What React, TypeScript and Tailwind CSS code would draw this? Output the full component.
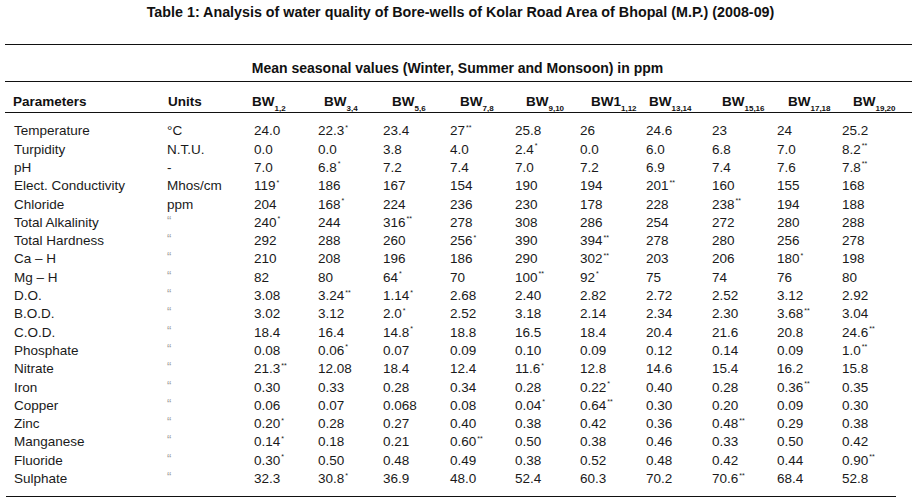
import React from 'react';

type Row = [string, string, string[]];

const rows: Row[] = [
  ['Temperature', '°C', ['24.0', '22.3*', '23.4', '27**', '25.8', '26', '24.6', '23', '24', '25.2']],
  ['Turpidity', 'N.T.U.', ['0.0', '0.0', '3.8', '4.0', '2.4*', '0.0', '6.0', '6.8', '7.0', '8.2**']],
  ['pH', '-', ['7.0', '6.8*', '7.2', '7.4', '7.0', '7.2', '6.9', '7.4', '7.6', '7.8**']],
  ['Elect. Conductivity', 'Mhos/cm', ['119*', '186', '167', '154', '190', '194', '201**', '160', '155', '168']],
  ['Chloride', 'ppm', ['204', '168*', '224', '236', '230', '178', '228', '238**', '194', '188']],
  ['Total Alkalinity', '“', ['240*', '244', '316**', '278', '308', '286', '254', '272', '280', '288']],
  ['Total Hardness', '“', ['292', '288', '260', '256*', '390', '394**', '278', '280', '256', '278']],
  ['Ca – H', '“', ['210', '208', '196', '186', '290', '302**', '203', '206', '180*', '198']],
  ['Mg – H', '“', ['82', '80', '64*', '70', '100**', '92*', '75', '74', '76', '80']],
  ['D.O.', '“', ['3.08', '3.24**', '1.14*', '2.68', '2.40', '2.82', '2.72', '2.52', '3.12', '2.92']],
  ['B.O.D.', '“', ['3.02', '3.12', '2.0*', '2.52', '3.18', '2.14', '2.34', '2.30', '3.68**', '3.04']],
  ['C.O.D.', '“', ['18.4', '16.4', '14.8*', '18.8', '16.5', '18.4', '20.4', '21.6', '20.8', '24.6**']],
  ['Phosphate', '“', ['0.08', '0.06*', '0.07', '0.09', '0.10', '0.09', '0.12', '0.14', '0.09', '1.0**']],
  ['Nitrate', '“', ['21.3**', '12.08', '18.4', '12.4', '11.6*', '12.8', '14.6', '15.4', '16.2', '15.8']],
  ['Iron', '“', ['0.30', '0.33', '0.28', '0.34', '0.28', '0.22*', '0.40', '0.28', '0.36**', '0.35']],
  ['Copper', '“', ['0.06', '0.07', '0.068', '0.08', '0.04*', '0.64**', '0.30', '0.20', '0.09', '0.30']],
  ['Zinc', '“', ['0.20*', '0.28', '0.27', '0.40', '0.38', '0.42', '0.36', '0.48**', '0.29', '0.38']],
  ['Manganese', '“', ['0.14*', '0.18', '0.21', '0.60**', '0.50', '0.38', '0.46', '0.33', '0.50', '0.42']],
  ['Fluoride', '“', ['0.30*', '0.50', '0.48', '0.49', '0.38', '0.52', '0.48', '0.42', '0.44', '0.90**']],
  ['Sulphate', '“', ['32.3', '30.8*', '36.9', '48.0', '52.4', '60.3', '70.2', '70.6**', '68.4', '52.8']],
];

// header: [main, subscript]
const wells: [string, string][] = [
  ['BW', '1,2'], ['BW', '3,4'], ['BW', '5,6'], ['BW', '7,8'], ['BW', '9,10'],
  ['BW1', '1,12'], ['BW', '13,14'], ['BW', '15,16'], ['BW', '17,18'], ['BW', '19,20'],
];

const dataCols = ['w-[64px]', 'w-[65px]', 'w-[67px]', 'w-[65px]', 'w-[65px]', 'w-[66px]', 'w-[66px]', 'w-[65px]', 'w-[65px]', 'flex-1'];
const headCols = ['w-[72px]', 'w-[68px]', 'w-[68px]', 'w-[66px]', 'w-[65px]', 'w-[58px]', 'w-[73px]', 'w-[66px]', 'w-[65px]', 'flex-1'];

const Value: React.FC<{ v: string }> = ({ v }) => {
  const m = v.match(/^(.*?)(\**)$/);
  const num = m ? m[1] : v;
  const stars = m ? m[2] : '';
  return (
    <span>
      {num}
      {stars && <sup className="text-[7px] leading-none align-[2px] ml-[1px]">{stars}</sup>}
    </span>
  );
};

export default function App() {
  return (
    <div className="w-[915px] h-[501px] bg-white overflow-hidden text-[#1a1a1a] font-['Liberation_Sans',Arial,sans-serif]">
      {/* Title */}
      <div className="h-[26px] flex items-center justify-center text-[14.3px] font-bold text-[#111] pl-[6px]">
        Table 1: Analysis of water quality of Bore-wells of Kolar Road Area of Bhopal (M.P.) (2008-09)
      </div>

      <div className="mt-[18px] ml-[5px] w-[907px] border-t-[1.5px] border-[#111]" />

      <div className="h-[36px] flex items-center justify-center text-[14px] font-bold text-[#111] pt-[10px]">
        Mean seasonal values (Winter, Summer and Monsoon) in ppm
      </div>

      <div className="ml-[5px] w-[907px] border-t-[1.5px] border-[#111]" />

      {/* Header row */}
      <div className="flex items-center h-[30px] pt-[10px] pl-[13px] text-[13.5px] font-bold text-[#111]">
        <div className="w-[155px]">Parameters</div>
        <div className="w-[84px]">Units</div>
        {wells.map(([main, sub], i) => (
          <div key={i} className={`${headCols[i]} whitespace-nowrap`}>
            {main}
            <sub className="text-[8px] leading-none align-[-3px]">{sub}</sub>
          </div>
        ))}
      </div>

      <div className="ml-[5px] w-[907px] border-t-[1.5px] border-[#111]" />

      {/* Data rows */}
      <div className="pt-[9px] pb-[8px]">
        {rows.map(([param, unit, values]) => (
          <div key={param} className="flex items-center h-[18.3px] pl-[14px] text-[13.5px] leading-none">
            <div className="w-[153px] whitespace-nowrap">{param}</div>
            <div className="w-[87px]">
              {unit === '“' ? (
                <span className="text-[13px] text-[#a0a0a0] relative top-[-2px]">“</span>
              ) : (
                unit
              )}
            </div>
            {values.map((v, i) => (
              <div key={i} className={`${dataCols[i]} whitespace-nowrap`}>
                <Value v={v} />
              </div>
            ))}
          </div>
        ))}
      </div>

      <div className="ml-[6px] w-[890px] border-t-[1.5px] border-[#111]" />
    </div>
  );
}
